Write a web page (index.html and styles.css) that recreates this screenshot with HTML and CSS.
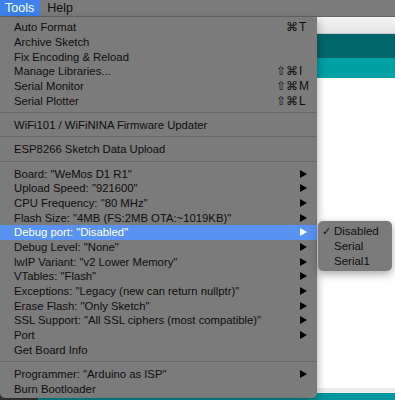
FILE: index.html
```html
<!DOCTYPE html>
<html lang="en">
<head>
  <meta charset="UTF-8" />
  <title>Tools menu</title>
  <link rel="stylesheet" href="styles.css">
</head>
<body>

<div class="screen">
  <div class="menubar">
    <span class="menu-title active">Tools</span>
    <span class="menu-title">Help</span>
  </div>

  <div class="app">
    <div class="app-header"></div>
    <div class="app-toolbar"></div>
    <div class="app-tabs"></div>
    <div class="app-editor"></div>
    <div class="app-rule"></div>
    <div class="app-footer"><span class="footer-left"></span></div>
  </div>

  <div class="dropdown">
    <div class="item">Auto Format<span class="keys"><span class="mods">⌘</span><span class="key">T</span></span></div>
    <div class="item">Archive Sketch</div>
    <div class="item">Fix Encoding &amp; Reload</div>
    <div class="item">Manage Libraries...<span class="keys"><span class="mods">⇧⌘</span><span class="key">I</span></span></div>
    <div class="item">Serial Monitor<span class="keys"><span class="mods">⇧⌘</span><span class="key">M</span></span></div>
    <div class="item">Serial Plotter<span class="keys"><span class="mods">⇧⌘</span><span class="key">L</span></span></div>
    <div class="sep"></div>
    <div class="item">WiFi101 / WiFiNINA Firmware Updater</div>
    <div class="sep"></div>
    <div class="item">ESP8266 Sketch Data Upload</div>
    <div class="sep"></div>
    <div class="item">Board: "WeMos D1 R1"<span class="arrow"></span></div>
    <div class="item">Upload Speed: "921600"<span class="arrow"></span></div>
    <div class="item">CPU Frequency: "80 MHz"<span class="arrow"></span></div>
    <div class="item">Flash Size: "4MB (FS:2MB OTA:~1019KB)"<span class="arrow"></span></div>
    <div class="item selected">Debug port: "Disabled"<span class="arrow"></span></div>
    <div class="item">Debug Level: "None"<span class="arrow"></span></div>
    <div class="item">lwIP Variant: "v2 Lower Memory"<span class="arrow"></span></div>
    <div class="item">VTables: "Flash"<span class="arrow"></span></div>
    <div class="item">Exceptions: "Legacy (new can return nullptr)"<span class="arrow"></span></div>
    <div class="item">Erase Flash: "Only Sketch"<span class="arrow"></span></div>
    <div class="item">SSL Support: "All SSL ciphers (most compatible)"<span class="arrow"></span></div>
    <div class="item">Port<span class="arrow"></span></div>
    <div class="item">Get Board Info</div>
    <div class="sep"></div>
    <div class="item">Programmer: "Arduino as ISP"<span class="arrow"></span></div>
    <div class="item">Burn Bootloader</div>
  </div>

  <div class="submenu">
    <div class="sub-item"><span class="check">✓</span>Disabled</div>
    <div class="sub-item"><span class="check"></span>Serial</div>
    <div class="sub-item"><span class="check"></span>Serial1</div>
  </div>
</div>

</body>
</html>
```

FILE: styles.css
```css
body {
  margin: 0;
  padding: 0;
  font-family: "Liberation Sans", Arial, sans-serif;
  background: #fff;
}
.screen {
  position: relative;
  width: 395px;
  height: 400px;
  overflow: hidden;
}
.menubar {
  display: flex;
  height: 17px;
  background: #7b7b7b;
  border-bottom: 1px solid #666;
  box-sizing: border-box;
  font-size: 12.5px;
  color: #0e0e0e;
}
.menu-title {
  padding: 0 6px 0 5px;
  line-height: 16px;
  margin-right: 2px;
}
.menu-title.active {
  background: #3d82ee;
  color: #fff;
}
.app {
  display: flex;
  flex-direction: column;
  height: 383px;
}
.app-header {
  height: 17px;
  background: linear-gradient(#f4f4f4, #e4e4e4);
  border-bottom: 1px solid #c8c8c8;
  box-sizing: border-box;
}
.app-toolbar {
  height: 24px;
  background: #006669;
}
.app-tabs {
  height: 20px;
  background: #00a0a4;
}
.app-editor {
  flex: 1;
  background: #fff;
}
.app-rule {
  height: 5px;
  background: #ececec;
}
.app-footer {
  height: 7px;
  background: #00979c;
}
.footer-left {
  display: block;
  width: 38px;
  height: 100%;
  background: #3a3a3a;
}
.dropdown {
  position: absolute;
  top: 17px;
  left: 0;
  width: 317px;
  padding: 3px 0 2px;
  background: #7b7b7b;
  border-radius: 0 0 5px 5px;
  box-shadow: 0 3px 10px rgba(0, 0, 0, 0.35);
  font-size: 11.3px;
  color: #0e0e0e;
}
.item {
  display: flex;
  align-items: center;
  height: 14.67px;
  padding: 0 10px 0 14px;
  white-space: nowrap;
}
.item.selected {
  background: #5893f3;
  color: #fff;
}
.keys {
  display: flex;
  margin-left: auto;
  font-size: 12px;
}
.mods {
  text-align: right;
}
.key {
  width: 8px;
  padding-left: 1px;
}
.arrow {
  margin-left: auto;
  width: 0;
  height: 0;
  border-left: 7px solid #000;
  border-top: 4px solid transparent;
  border-bottom: 4px solid transparent;
}
.selected .arrow {
  border-left-color: #fff;
}
.sep {
  height: 1px;
  margin: 4px 0 4.7px;
  background: #686868;
}
.submenu {
  position: absolute;
  top: 221px;
  left: 318px;
  width: 74px;
  padding: 3px 0;
  background: #7b7b7b;
  border-radius: 5px;
  box-shadow: 0 3px 8px rgba(0, 0, 0, 0.35);
  font-size: 11.5px;
  color: #0e0e0e;
}
.sub-item {
  display: flex;
  align-items: center;
  height: 14.67px;
}
.check {
  width: 12px;
  padding-left: 4px;
  font-family: "DejaVu Sans", sans-serif;
  font-size: 11px;
  font-weight: bold;
}
```
